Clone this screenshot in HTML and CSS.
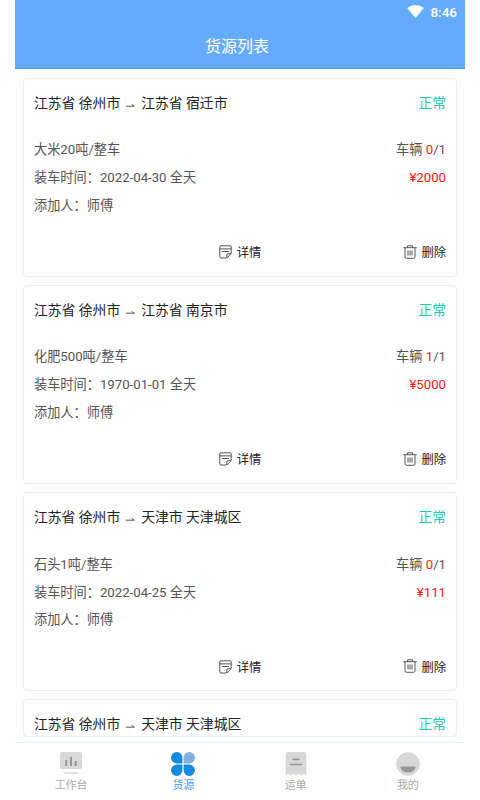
FILE: index.html
```html
<!DOCTYPE html>
<html lang="zh-CN">
<head>
<meta charset="utf-8">
<title>货源列表</title>
<link rel="stylesheet" href="styles.css">
</head>
<body>
<svg class="defs" width="0" height="0" aria-hidden="true">
  <symbol id="note" viewBox="0 0 13 14"><path d="M7.500 13H2Q.8 13 .8 11.800V2Q.8.8 2 .8h9Q12.200.8 12.200 2v6.500L7.800 13V9.900Q7.800 8.700 9 8.700h3M1 3.900h11M3 6.500h7"/></symbol>
  <symbol id="trash" viewBox="0 0 14 14"><path d="M.3 2.700h13.400M4.500 2.500V.8h5v1.700M2 3v8.700q0 1.600 1.500 1.600h7q1.500 0 1.500-1.600V3M5 5.500v5M7 5.500v5M9 5.500v5"/></symbol>
  <symbol id="arrow" viewBox="0 0 10 4"><path d="M.8 3.200h8.500L6.700 1.300"/></symbol>
</svg>
<div class="app">
  <header class="header">
    <div class="status">
      <svg class="wifi" viewBox="0 0 18 14"><path d="M0 3.200Q9-3 18 3.200L9 14z"/></svg>
      <span>8:46</span>
    </div>
    <h1>货源列表</h1>
  </header>
  <main class="list">
    <article class="card">
      <div class="row route"><span>江苏省 徐州市<svg class="arrow"><use href="#arrow"/></svg>江苏省 宿迁市</span><span class="state">正常</span></div>
      <div class="info">
        <div class="row"><span>大米20吨/整车</span><span>车辆 <b>0</b>/1</span></div>
        <div class="row"><span>装车时间：2022-04-30 全天</span><b>¥2000</b></div>
        <div class="row"><span>添加人：师傅</span></div>
      </div>
      <div class="actions"><span class="action"><svg class="note"><use href="#note"/></svg>详情</span><span class="action delete"><svg class="trash"><use href="#trash"/></svg>删除</span></div>
    </article>
    <article class="card">
      <div class="row route"><span>江苏省 徐州市<svg class="arrow"><use href="#arrow"/></svg>江苏省 南京市</span><span class="state">正常</span></div>
      <div class="info">
        <div class="row"><span>化肥500吨/整车</span><span>车辆 <b>1</b>/1</span></div>
        <div class="row"><span>装车时间：1970-01-01 全天</span><b>¥5000</b></div>
        <div class="row"><span>添加人：师傅</span></div>
      </div>
      <div class="actions"><span class="action"><svg class="note"><use href="#note"/></svg>详情</span><span class="action delete"><svg class="trash"><use href="#trash"/></svg>删除</span></div>
    </article>
    <article class="card">
      <div class="row route"><span>江苏省 徐州市<svg class="arrow"><use href="#arrow"/></svg>天津市 天津城区</span><span class="state">正常</span></div>
      <div class="info">
        <div class="row"><span>石头1吨/整车</span><span>车辆 <b>0</b>/1</span></div>
        <div class="row"><span>装车时间：2022-04-25 全天</span><b>¥111</b></div>
        <div class="row"><span>添加人：师傅</span></div>
      </div>
      <div class="actions"><span class="action"><svg class="note"><use href="#note"/></svg>详情</span><span class="action delete"><svg class="trash"><use href="#trash"/></svg>删除</span></div>
    </article>
    <article class="card partial">
      <div class="row route"><span>江苏省 徐州市<svg class="arrow"><use href="#arrow"/></svg>天津市 天津城区</span><span class="state">正常</span></div>
    </article>
  </main>
  <nav class="tabs">
    <a class="tab">
      <svg viewBox="0 0 24 24"><rect x="1" y="0" width="22" height="17" rx="2" fill="#d8d8d8"/><path d="M7.200 8v6M12 5v9M16.700 9v5" stroke="#999" stroke-width="2"/><path d="M5 21.200h14" stroke="#d8d8d8" stroke-width="1.500"/></svg>
      <span>工作台</span>
    </a>
    <a class="tab active">
      <svg viewBox="0 0 24 24"><g fill="#1789df"><path d="M11.400 11.400H6A5.700 5.700 0 1 1 11.400 6z"/><path d="M11.400 12.600H6A5.700 5.700 0 1 0 11.400 18z"/><path d="M12.600 12.600H18A5.700 5.700 0 1 1 12.600 18z"/></g><path d="M12.600 11.400H18A5.700 5.700 0 1 0 12.600 6z" fill="#85b0e0"/></svg>
      <span>货源</span>
    </a>
    <a class="tab">
      <svg viewBox="0 0 24 24"><path d="M1.700 2q0-2 2-2h16.600q2 0 2 2v21.500l-2.600-1.700-2.600 1.700-2.500-1.700L12 23.500l-2.600-1.700-2.500 1.700-2.600-1.700-2.600 1.700z" fill="#d8d8d8"/><path d="M8.500 7.500h7M6 12.500h12" stroke="#999" stroke-width="1.600"/></svg>
      <span>运单</span>
    </a>
    <a class="tab">
      <svg viewBox="0 0 24 24"><circle cx="12" cy="12" r="11.800" fill="#d8d8d8"/><path d="M4.200 14.400h15.600q-1.300 6.200-7.800 6.200t-7.800-6.200z" fill="#999"/></svg>
      <span>我的</span>
    </a>
  </nav>
</div>
</body>
</html>
```

FILE: styles.css
```css
* {
  box-sizing: border-box;
}

body {
  margin: 0;
  background: #fefefe;
  font-family: Roboto, "Noto Sans CJK SC", sans-serif;
}

.defs {
  display: none;
}

.app {
  display: flex;
  flex-direction: column;
  width: 450px;
  height: 800px;
  margin: 0 auto;
  overflow: hidden;
}

.header {
  flex: none;
  height: 69px;
  background: #64abfb;
  border-bottom: 1px solid #489efb;
  color: #fff;
}

.status {
  display: flex;
  justify-content: flex-end;
  align-items: center;
  gap: 6px;
  height: 24px;
  padding-right: 8px;
  font-size: 13.5px;
  font-weight: 500;
}

.wifi {
  width: 17px;
  height: 13px;
  margin-top: -2px;
  fill: #fff;
}

h1 {
  margin: 0;
  font-size: 16px;
  font-weight: 400;
  line-height: 45px;
  text-align: center;
  text-indent: -6px;
}

.list {
  display: flex;
  flex-direction: column;
  gap: 8.300px;
  flex: none;
  height: 673px;
  padding: 8.500px 8px 0;
}

.card {
  flex: none;
  height: 199px;
  padding: 0 10px;
  border: 1px solid #e6f0f9;
  border-radius: 4px;
}

.partial {
  height: 37.500px;
  overflow: hidden;
}

.row {
  display: flex;
  justify-content: space-between;
}

.route {
  height: 57.700px;
  font-size: 13.800px;
  line-height: 48px;
  color: #222;
}

.state {
  color: #1dc8b5;
}

.info {
  font-size: 13.200px;
  line-height: 27.800px;
  color: #555;
}

b {
  font-weight: 400;
  color: #fb1818;
}

.arrow {
  width: 10px;
  height: 4px;
  margin: 0 6px 0 5px;
  vertical-align: 1px;
}

.arrow,
.note,
.trash {
  fill: none;
  stroke: #555;
  stroke-width: 1;
}

.actions {
  display: grid;
  grid-template-columns: 1fr auto 1fr;
  align-items: center;
  height: 20px;
  margin-top: 22.500px;
  font-size: 12.300px;
  color: #222;
}

.action {
  display: flex;
  grid-column: 2;
  align-items: center;
  gap: 5px;
}

.delete {
  grid-column: 3;
  justify-self: end;
  gap: 4px;
}

.note {
  width: 13px;
  height: 14px;
}

.trash {
  width: 14px;
  height: 14px;
  margin-top: -1px;
}

.tabs {
  display: grid;
  grid-template-columns: repeat(4, 1fr);
  flex: 1;
  margin-right: 1px;
  border-top: 1px solid #e6f0f9;
}

.tab {
  display: flex;
  flex-direction: column;
  align-items: center;
  padding-top: 8.500px;
  font-size: 11px;
  line-height: 16px;
  color: #aaa;
}

.tab svg {
  width: 24px;
  height: 24px;
}

.tab span {
  margin-top: 2px;
}

.active {
  color: #4a9df5;
}
```
